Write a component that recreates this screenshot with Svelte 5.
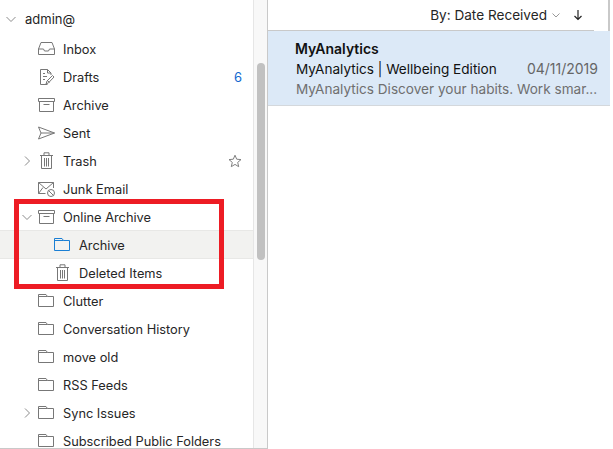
<script lang="ts">
	type Folder = {
		name: string;
		icon: string;
		level?: number;
		chevron?: 'open' | 'closed';
		count?: number;
		star?: boolean;
		selected?: boolean;
	};

	const folders: Folder[] = [
		{ name: 'Inbox', icon: 'inbox' },
		{ name: 'Drafts', icon: 'drafts', count: 6 },
		{ name: 'Archive', icon: 'archive' },
		{ name: 'Sent', icon: 'sent' },
		{ name: 'Trash', icon: 'trash', chevron: 'closed', star: true },
		{ name: 'Junk Email', icon: 'junk' },
		{ name: 'Online Archive', icon: 'archive', chevron: 'open' },
		{ name: 'Archive', icon: 'folder', level: 1, selected: true },
		{ name: 'Deleted Items', icon: 'trash', level: 1 },
		{ name: 'Clutter', icon: 'folder' },
		{ name: 'Conversation History', icon: 'folder' },
		{ name: 'move old', icon: 'folder' },
		{ name: 'RSS Feeds', icon: 'folder' },
		{ name: 'Sync Issues', icon: 'folder', chevron: 'closed' },
		{ name: 'Subscribed Public Folders', icon: 'folder' }
	];
</script>

{#snippet chevron(dir: string)}
	<svg class="chevron" width="12" height="12" viewBox="0 0 12 12">
		{#if dir === 'open'}
			<path d="M1.5 4 L6 8.5 L10.5 4" />
		{:else}
			<path d="M4 1.5 L8.5 6 L4 10.5" />
		{/if}
	</svg>
{/snippet}

{#snippet icon(name: string, selected: boolean)}
	<svg class="icon" class:blue={selected} width="18" height="18" viewBox="0 0 18 18">
		{#if name === 'inbox'}
			<path d="M4 2.5 H15 L17.5 9 V14.5 H1.5 V9 Z M1.5 9 H6.5 L7.5 11 H11.5 L12.5 9 H17.5" />
		{:else if name === 'drafts'}
			<path d="M10.5 16.5 H3.5 V1.5 H10.5 L14 5 V7 M10.5 1.5 V5 H14 M6 5.5 H8 M6 8.5 H10 M6 11.5 H8" />
			<path d="M9 16 L10 13 L15.5 7.5 L17 9 L11.5 14.8 Z M10.5 12.5 L12.5 14.5" />
		{:else if name === 'archive'}
			<path d="M1.5 2.5 H17.5 V5.5 H1.5 Z M2.5 5.5 V15.5 H16.5 V5.5 M6.5 8.5 H12.5" />
		{:else if name === 'sent'}
			<path d="M1.5 3 L17.5 9 L1.5 15 L4 9 Z M4 9 H17.5" />
		{:else if name === 'trash'}
			<path d="M3 3.5 H16 M7 3.5 V0.8 H12 V3.5 M4.5 3.5 V16.5 H14.5 V3.5 M7.5 6 V14.5 M9.5 6 V14.5 M11.5 6 V14.5" />
		{:else if name === 'junk'}
			<path d="M8.5 13.5 H1.5 V2.5 H16.5 V8 M1.5 2.5 L9 9 L16.5 2.5 M1.5 13.5 L6 7.5" />
			<circle cx="14" cy="13" r="3.5" />
			<path d="M11.5 10.5 L16.5 15.5" />
		{:else}
			<path d="M1.5 14.5 V2.5 H9 L10.5 4.5 H16.5 V14.5 Z M1.5 4.5 H10.5" />
		{/if}
	</svg>
{/snippet}

<div class="mail">
	<div class="nav">
		<aside class="sidebar">
			<div class="account">
				<span class="slot">{@render chevron('open')}</span>
				<span>admin@</span>
			</div>
			<ul class="folders">
				{#each folders as f}
					<li class="folder" class:selected={f.selected} class:nested={f.level === 1}>
						<span class="slot">
							{#if f.chevron}{@render chevron(f.chevron)}{/if}
						</span>
						{@render icon(f.icon, !!f.selected)}
						<span class="name">{f.name}</span>
						{#if f.count}<span class="count">{f.count}</span>{/if}
						{#if f.star}
							<svg class="star" width="14" height="14" viewBox="0 0 14 14">
								<path d="M7 1.2 L8.7 5.2 L13 5.6 L9.7 8.4 L10.7 12.7 L7 10.4 L3.3 12.7 L4.3 8.4 L1 5.6 L5.3 5.2 Z" />
							</svg>
						{/if}
					</li>
				{/each}
			</ul>
			<div class="callout"></div>
		</aside>

		<div class="scrollbar"><div class="thumb"></div></div>
	</div>

	<section class="list">
		<header class="sortwrap">
			<div class="sortbar">
				<span>By: Date Received</span>
				<svg class="sort-caret" width="10" height="10" viewBox="0 0 10 10"><path d="M1.5 3.5 L5 7 L8.5 3.5" /></svg>
				<svg class="sort-arrow" width="12" height="12" viewBox="0 0 12 12"><path d="M6 1 V10.5 M2.5 7 L6 10.5 L9.5 7" /></svg>
			</div>
		</header>
		<article class="message">
			<div class="sender">MyAnalytics</div>
			<div class="subject-row">
				<span>MyAnalytics | Wellbeing Edition</span>
				<span class="date">04/11/2019</span>
			</div>
			<div class="preview">MyAnalytics Discover your habits. Work smar...</div>
		</article>
	</section>
</div>

<style>
	:global(body) {
		margin: 0;
		background: #fff;
	}

	.mail {
		display: flex;
		width: 613px;
		height: 449px;
		overflow: hidden;
		font-family: Inter, "Liberation Sans", sans-serif;
		font-size: 13px;
		color: #262626;
	}

	.nav {
		display: flex;
		flex: none;
		width: 268px;
		height: 448px;
		border-bottom: 1px solid #c9c9c9;
		overflow: hidden;
	}

	.sidebar {
		position: relative;
		width: 253px;
		flex: none;
		padding-top: 5px;
		box-sizing: border-box;
	}

	.account {
		display: flex;
		align-items: center;
		height: 28px;
		padding-left: 5px;
		gap: 8px;
	}

	.folders {
		list-style: none;
		margin: 2px 0 0;
		padding: 0;
		font-size: 12.8px;
	}

	.folder {
		display: flex;
		align-items: center;
		height: 28px;
		padding: 0 11px 0 21px;
		box-sizing: border-box;
	}

	.folder.nested {
		padding-left: 53px;
	}

	.folder.nested .name {
		margin-left: 8px;
	}

	.folder.selected {
		height: 27px;
		padding-top: 1px;
		margin-bottom: 1px;
		background: #f2f2f0;
		box-shadow: 0 -1px 0 #e8e8e6, 0 1px 0 #e8e8e6;
	}

	.slot {
		display: flex;
		width: 12px;
		height: 12px;
		margin-right: 4px;
		flex: none;
	}

	.folder.nested .slot {
		width: 0;
		margin-right: 0;
	}

	.account .slot {
		margin-right: 0;
	}

	.chevron {
		fill: none;
		stroke: #8c8c8c;
		stroke-width: 1;
	}

	.icon {
		flex: none;
		fill: none;
		stroke: #777;
		stroke-width: 1;
	}

	.icon.blue {
		stroke: #1a7fd4;
	}

	.name {
		flex: 1;
		margin-left: 8px;
		white-space: nowrap;
	}

	.count {
		color: #1068d0;
		font-size: 13px;
	}

	.star {
		fill: none;
		stroke: #808080;
		stroke-width: 1;
	}

	.callout {
		position: absolute;
		left: 14px;
		top: 199px;
		width: 200px;
		height: 80px;
		border: 5px solid #ed1c24;
	}

	.scrollbar {
		width: 15px;
		flex: none;
		box-sizing: border-box;
		background: #f8f8f8;
		border-left: 1px solid #e6e6e6;
		border-right: 1px solid #c9c9c9;
		padding: 63px 2px 0 3px;
	}

	.thumb {
		height: 197px;
		border-radius: 4px;
		background: #c1c1c1;
	}

	.list {
		width: 342px;
		flex: none;
		font-size: 13.6px;
	}

	.sortwrap {
		height: 31px;
		border-right: 2px solid #c9c9c9;
		box-sizing: content-box;
		width: 340px;
	}

	.sortbar {
		display: flex;
		align-items: center;
		justify-content: flex-end;
		height: 31px;
		width: 326px;
		box-sizing: border-box;
		border-bottom: 1px solid #c9c9c9;
		padding-right: 10px;
	}

	.sort-caret {
		margin-left: 4px;
		fill: none;
		stroke: #999;
	}

	.sort-arrow {
		margin-left: 11px;
		fill: none;
		stroke: #222;
		stroke-width: 1.2;
	}

	.message {
		height: 75px;
		box-sizing: border-box;
		background: #dce9f7;
		border-bottom: 1px solid #d4d8dc;
		padding: 8px 12px 0 28px;
		line-height: 20px;
	}

	.sender {
		font-weight: 600;
		font-size: 14px;
		color: #111;
		margin-left: -1px;
	}

	.subject-row {
		display: flex;
		justify-content: space-between;
		color: #111;
	}

	.date {
		color: #666;
		font-size: 14px;
	}

	.preview {
		color: #6f6f6f;
		white-space: nowrap;
	}
</style>
